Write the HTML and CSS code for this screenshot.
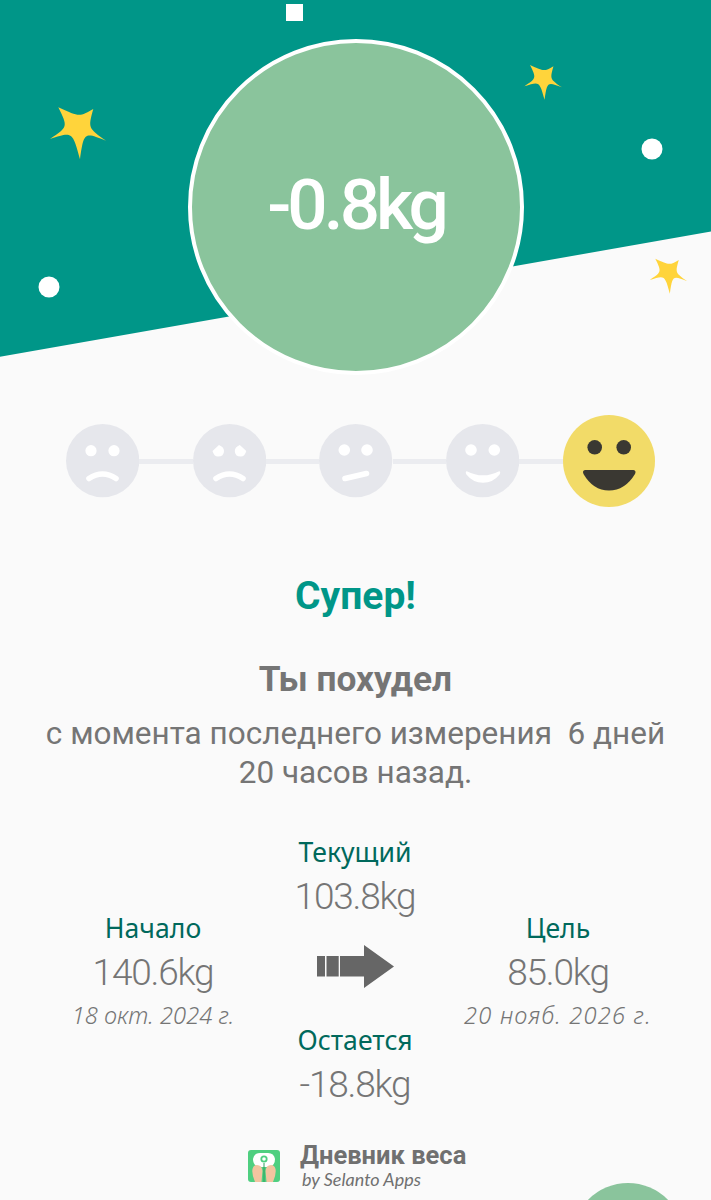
FILE: index.html
```html
<!DOCTYPE html>
<html lang="ru">
<head>
<meta charset="utf-8">
<title>Дневник веса</title>
<link rel="stylesheet" href="styles.css">
</head>
<body>
<main class="screen">
  <svg class="hero-bg" width="711" height="380" viewBox="0 0 711 380">
    <defs>
      <path id="star" d="M-19.7-22.7C1.4-13 1.4-13 15.3-21C10-2 10-2 28 10.7C6 2 6 2 2 29.3C-5.500 1.500-5.500 1.500-28 9C-10-3-10-3-19.7-22.7Z"/>
    </defs>
    <polygon class="teal" points="0,0 711,0 711,231.5 0,356.8"/>
    <rect class="white" x="286" y="4" width="17" height="17"/>
    <circle class="white" cx="49" cy="287" r="10.5"/>
    <circle class="white" cx="652" cy="149" r="10.5"/>
    <use class="star" href="#star" transform="translate(78 130)"/>
    <use class="star" href="#star" transform="translate(543.2 80.2) scale(.67)"/>
    <use class="star" href="#star" transform="translate(668.5 274) scale(.67)"/>
  </svg>
  <section class="hero">
    <div class="badge">-0.8kg</div>
  </section>

  <section class="faces">
    <svg class="face" viewBox="0 0 73.3 73.3">
      <circle class="face-bg" cx="36.65" cy="36.65" r="36.65"/>
      <circle class="white" cx="25" cy="26.7" r="5.6"/><circle class="white" cx="48" cy="26.7" r="5.6"/>
      <path class="mouth" d="M23 54.5Q36.500 45.500 50 54.500"/>
    </svg>
    <span class="link"></span>
    <svg class="face" viewBox="0 0 73.3 73.3">
      <circle class="face-bg" cx="36.65" cy="36.65" r="36.65"/>
      <path class="white" d="M19.500 27L26 21Q31 23 31 27Q31 32.500 25 32.500Q21 32.500 19.500 27ZM53.300 27L46.800 21Q41.800 23 41.800 27Q41.800 32.500 47.800 32.500Q51.800 32.500 53.300 27Z"/>
      <path class="mouth" d="M23 54.5Q36.500 45.500 50 54.500"/>
    </svg>
    <span class="link"></span>
    <svg class="face" viewBox="0 0 73.3 73.3">
      <circle class="face-bg" cx="36.65" cy="36.65" r="36.65"/>
      <circle class="white" cx="25.3" cy="26" r="5.8"/><circle class="white" cx="48" cy="26" r="5.8"/>
      <path class="mouth" d="M26 54.5L47.5 49.5"/>
    </svg>
    <span class="link"></span>
    <svg class="face" viewBox="0 0 73.3 73.3">
      <circle class="face-bg" cx="36.65" cy="36.65" r="36.65"/>
      <circle class="white" cx="25" cy="26" r="5.8"/><circle class="white" cx="48.3" cy="26" r="5.8"/>
      <path class="white" d="M20.8 47.2Q37 55.5 53.2 47.2Q55 47.5 53.6 50.5Q47 58.8 37 58.8Q27 58.8 20.4 50.5Q19 47.5 20.8 47.2Z"/>
    </svg>
    <span class="link link-last"></span>
    <svg class="face face-active" viewBox="0 0 92 92">
      <circle class="yellow" cx="46" cy="46" r="46"/>
      <circle class="dark" cx="31.7" cy="32.3" r="7.3"/><circle class="dark" cx="60.7" cy="32.3" r="7.3"/>
      <path class="dark" d="M22 55H70.5Q73.5 55.5 72 59Q62 75.5 46 75.5Q30 75.5 20.5 59Q19 55.5 22 55Z"/>
    </svg>
  </section>

  <section class="message">
    <h1 class="headline">Супер!</h1>
    <h2 class="subhead">Ты похудел</h2>
    <p class="detail">с момента последнего измерения&nbsp; 6 дней<br>20 часов назад.</p>
  </section>

  <section class="stats">
    <div class="stat">
      <div class="stat-label">Начало</div>
      <div class="stat-value">140.6kg</div>
      <div class="stat-date">18 окт. 2024 г.</div>
    </div>
    <div class="stat-middle">
      <div class="stat">
        <div class="stat-label">Текущий</div>
        <div class="stat-value">103.8kg</div>
      </div>
      <svg class="arrow" width="78" height="43" viewBox="0 0 78 43">
        <path d="M0 11H8V31.500H0ZM9.500 11H21.700V31.500H9.500ZM23 11H47V0L77 21.500L47 43V31.500H23Z"/>
      </svg>
      <div class="stat">
        <div class="stat-label">Остается</div>
        <div class="stat-value">-18.8kg</div>
      </div>
    </div>
    <div class="stat">
      <div class="stat-label">Цель</div>
      <div class="stat-value">85.0kg</div>
      <div class="stat-date stat-date-wide">20 нояб. 2026 г.</div>
    </div>
  </section>

  <footer class="brand">
    <svg class="brand-icon" width="32" height="32" viewBox="0 0 32 32">
      <rect class="icon-bg" width="32" height="32" rx="3"/>
      <path class="white" d="M5 9Q6 3 12 3H20Q26 3 27 9Q27 15 22 17H10Q5 15 5 9Z"/>
      <circle class="icon-bg" cx="16" cy="9" r="3.6"/>
      <circle class="white" cx="16" cy="9" r="1.8"/>
      <path class="icon-line" d="M16 13V32"/>
      <path class="foot" d="M9 15Q14 15 14.500 21L13.500 32H7Q3.500 24 4.500 19Q5.500 15 9 15ZM23 15Q18 15 17.500 21L18.500 32H25Q28.500 24 27.500 19Q26.500 15 23 15Z"/>
    </svg>
    <div class="brand-text">
      <div class="brand-name">Дневник веса</div>
      <div class="brand-by">by Selanto Apps</div>
    </div>
  </footer>

  <div class="fab"></div>
</main>
</body>
</html>
```
FILE: styles.css
```css
* { box-sizing: border-box; }
html, body { margin: 0; padding: 0; height: 1200px; overflow: hidden; }
body { background: #fafafa; font-family: "Roboto", sans-serif; }

.screen { position: relative; width: 711px; height: 1200px; overflow: hidden; background: #fafafa; }
.hero-bg { position: absolute; left: 0; top: 0; }
.teal { fill: #009688; }
.white { fill: #fff; }
.star { fill: #ffd43b; }

.hero { position: relative; height: 415px; padding-top: 39px; display: flex; justify-content: center; }
.badge {
  width: 336px; height: 336px; border-radius: 50%; margin-left: 1px;
  border: 4px solid #fff; background: #8ac49c; color: #fff;
  display: flex; align-items: center; justify-content: center;
  font-family: "Roboto", sans-serif; font-size: 71px; font-weight: 500; letter-spacing: -3.9px;
  padding-bottom: 5px;
}

.faces { display: flex; align-items: center; padding-left: 66px; height: 92px; }
.face { width: 73.3px; height: 73.3px; flex: none; }
.face-active { width: 92px; height: 92px; }
.face-bg { fill: #e6e7ec; }
.mouth { fill: none; stroke: #fff; stroke-width: 5.6; stroke-linecap: round; }
.link { width: 53.4px; height: 5px; background: #ebecf0; flex: none; }
.link-last { width: 44px; }
.yellow { fill: #f2db68; }
.dark { fill: #3a3832; }

.message { text-align: center; padding-top: 65px; }
.headline { margin: 0; font-size: 39px; line-height: 48px; font-weight: 700; color: #009688; }
.subhead { margin: 37px 0 0; font-size: 35.3px; line-height: 44px; font-weight: 700; color: #757575; }
.detail { margin: 13px 0 0; font-size: 31.5px; line-height: 39px; color: #757575; }

.stats {
  display: grid; grid-template-columns: 226px 178px 228px; align-items: center;
  padding-left: 40px; margin-top: 42px;
}
.stat { text-align: center; white-space: nowrap; }
.stat-label { font-family: "Noto Sans", sans-serif; font-size: 26.6px; line-height: 36px; color: #00695c; }
.stat-value { font-family: "Roboto", sans-serif; font-weight: 300; font-size: 37px; line-height: 52px; color: #757575; letter-spacing: -1.2px; padding-top: 1px; margin-bottom: -1px; }
.stat-date { font-family: "Noto Sans", sans-serif; font-style: italic; font-weight: 300; font-size: 23.7px; line-height: 36px; color: #757575; margin-top: -2px; padding-bottom: 2px; }
.stat-date-wide { letter-spacing: 1.2px; }
.stat-middle { display: flex; flex-direction: column; align-items: center; }
.arrow { display: block; margin: 22.7px 0 34.7px 2px; }
.arrow path { fill: #666; }

.brand { display: flex; align-items: center; padding-left: 248px; margin-top: 32px; }
.brand-icon { flex: none; margin-right: 20px; }
.icon-bg { fill: #4fcf80; }
.icon-line { stroke: #2e9e5e; stroke-width: 1; }
.foot { fill: #f2c4a0; }
.brand-name { font-size: 25.5px; line-height: 26px; font-weight: 700; color: #707070; }
.brand-by { font-family: "Lato", sans-serif; font-style: italic; font-size: 18px; line-height: 22px; color: #707070; padding-left: 2px; }

.fab { position: absolute; left: 572px; top: 1183px; width: 112px; height: 112px; border-radius: 50%; background: #8ac49c; }
```
